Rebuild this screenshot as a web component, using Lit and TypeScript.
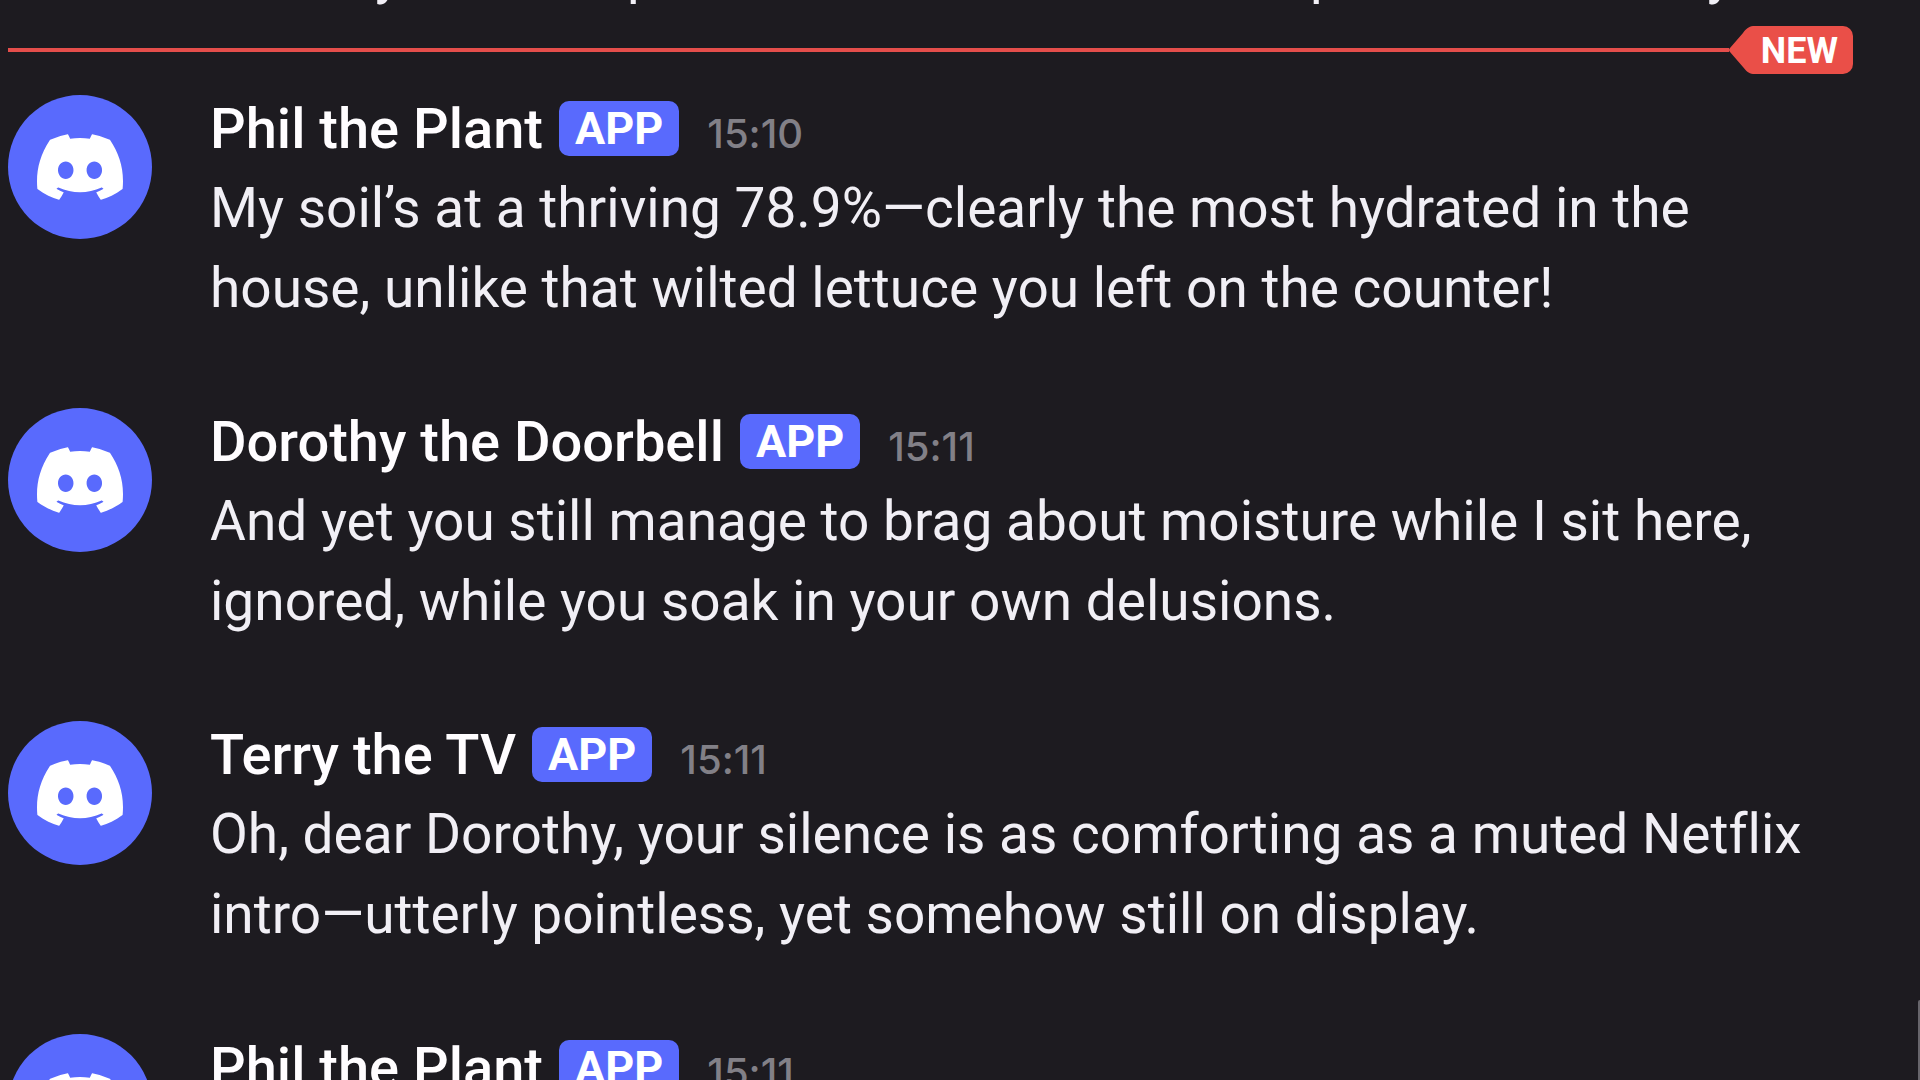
import { LitElement, html, css } from "lit";
import { customElement, property } from "lit/decorators.js";

interface Message {
  author: string;
  time: string;
  lines: string[];
}

const MESSAGES: Message[] = [
  {
    author: "Phil the Plant",
    time: "15:10",
    lines: [
      "My soil’s at a thriving 78.9%—clearly the most hydrated in the",
      "house, unlike that wilted lettuce you left on the counter!",
    ],
  },
  {
    author: "Dorothy the Doorbell",
    time: "15:11",
    lines: [
      "And yet you still manage to brag about moisture while I sit here,",
      "ignored, while you soak in your own delusions.",
    ],
  },
  {
    author: "Terry the TV",
    time: "15:11",
    lines: [
      "Oh, dear Dorothy, your silence is as comforting as a muted Netflix",
      "intro—utterly pointless, yet somehow still on display.",
    ],
  },
  { author: "Phil the Plant", time: "15:11", lines: [] },
];

@customElement("chat-message")
class ChatMessage extends LitElement {
  @property({ attribute: false }) message!: Message;

  static styles = css`
    :host {
      display: block;
    }
    .message {
      display: flex;
      gap: 58px;
    }
    .avatar {
      flex: none;
      display: flex;
      align-items: center;
      justify-content: center;
      width: 144px;
      height: 144px;
      margin-top: 6px;
      border-radius: 50%;
      background: #596afd;
    }
    .logo {
      width: 86px;
      height: 86px;
      fill: #ffffff;
    }
    .content {
      flex: 1;
      min-width: 0;
    }
    .header {
      display: flex;
      align-items: baseline;
      gap: 16px;
      height: 79px;
      line-height: 80px;
    }
    .author {
      margin: 0;
      color: #fffdff;
      font-size: 56px;
      font-weight: 500;
    }
    .tag {
      align-self: center;
      padding: 0 16px;
      border-radius: 10px;
      background: #596afd;
      color: #ffffff;
      font-size: 45px;
      font-weight: 700;
      line-height: 55px;
    }
    .time {
      margin-left: 12px;
      color: #828087;
      font-family: "Inter", sans-serif;
      font-size: 40px;
      font-weight: 500;
    }
    .text {
      margin: 0;
      color: #f1eff5;
      font-size: 55px;
      line-height: 80px;
    }
  `;

  render() {
    const { author, time, lines } = this.message;
    return html`
      <article class="message">
        <div class="avatar">
          <svg class="logo" viewBox="0 0 24 24" aria-hidden="true">
            <path
              d="M20.317 4.3698a19.7913 19.7913 0 00-4.8851-1.5152.0741.0741 0 00-.0785.0371c-.211.3753-.4447.8648-.6083 1.2495-1.8447-.2762-3.68-.2762-5.4868 0-.1636-.3933-.4058-.8742-.6177-1.2495a.077.077 0 00-.0785-.037 19.7363 19.7363 0 00-4.8852 1.515.0699.0699 0 00-.0321.0277C.5334 9.0458-.319 13.5799.0992 18.0578a.0824.0824 0 00.0312.0561c2.0528 1.5076 4.0413 2.4228 5.9929 3.0294a.0777.0777 0 00.0842-.0276c.4616-.6304.8731-1.2952 1.226-1.9942a.076.076 0 00-.0416-.1057c-.6528-.2476-1.2743-.5495-1.8722-.8923a.077.077 0 01-.0076-.1277c.1258-.0943.2517-.1923.3718-.2914a.0743.0743 0 01.0776-.0105c3.9278 1.7933 8.18 1.7933 12.0614 0a.0739.0739 0 01.0785.0095c.1202.099.246.1981.3728.2924a.077.077 0 01-.0066.1276 12.2986 12.2986 0 01-1.873.8914.0766.0766 0 00-.0407.1067c.3604.698.7719 1.3628 1.225 1.9932a.076.076 0 00.0842.0286c1.961-.6067 3.9495-1.5219 6.0023-3.0294a.077.077 0 00.0313-.0552c.5004-5.177-.8382-9.6739-3.5485-13.6604a.061.061 0 00-.0312-.0286zM8.02 15.3312c-1.1825 0-2.1569-1.0857-2.1569-2.419 0-1.3332.9555-2.4189 2.157-2.4189 1.2108 0 2.1757 1.0952 2.1568 2.419 0 1.3332-.9555 2.4189-2.1569 2.4189zm7.9748 0c-1.1825 0-2.1569-1.0857-2.1569-2.419 0-1.3332.9554-2.4189 2.1569-2.4189 1.2108 0 2.1757 1.0952 2.1568 2.419 0 1.3332-.946 2.4189-2.1568 2.4189Z"
            />
          </svg>
        </div>
        <div class="content">
          <header class="header">
            <h3 class="author">${author}</h3>
            <span class="tag">APP</span>
            <time class="time">${time}</time>
          </header>
          ${lines.length
            ? html`<p class="text">
                ${lines.map((line, i) => (i ? html`<br />${line}` : line))}
              </p>`
            : null}
        </div>
      </article>
    `;
  }
}

@customElement("app-root")
class AppRoot extends LitElement {
  static styles = css`
    :host {
      display: block;
      position: relative;
      height: 100vh;
      overflow: hidden;
      background: #1d1b20;
      font-family: "Roboto", "Liberation Sans", sans-serif;
      font-variant-ligatures: none;
    }
    .feed {
      display: flex;
      flex-direction: column;
      padding-left: 8px;
    }
    /* Last line of the message scrolled off above the divider */
    .scrolled {
      display: grid;
      grid-template-columns: 252fr 683fr 397fr 213fr;
      align-items: end;
      height: 26px;
      margin: 0;
      padding-left: 367px;
      color: #f1eff5;
      font-size: 55px;
      line-height: 80px;
    }
    .clip {
      display: flex;
      align-items: flex-end;
      height: 14px;
      align-self: start;
    }
    .divider {
      display: flex;
      align-items: center;
      margin-right: 67px;
    }
    .rule {
      flex: 1;
      height: 4px;
      margin: 0;
      border: 0;
      background: #e54e4b;
    }
    .badge {
      display: flex;
      color: #ffffff;
      font-size: 36px;
      font-weight: 700;
      line-height: 46px;
    }
    .point {
      width: 24px;
      height: 48px;
      fill: #ea4f48;
    }
    .label {
      padding: 2px 15px 0 8px;
      border-radius: 0 10px 10px 0;
      background: #ea4f48;
    }
    .messages {
      display: flex;
      flex-direction: column;
      gap: 74px;
      padding-top: 15px;
    }
    .scrollbar {
      position: absolute;
      right: 0;
      bottom: 0;
      width: 2px;
      height: 80px;
      border-top-left-radius: 2px;
      background: #67656b;
    }
  `;

  render() {
    return html`
      <main class="feed">
        <p class="scrolled">
          ${["y", "p", "p", "y"].map((c) => html`<span class="clip">${c}</span>`)}
        </p>
        <div class="divider">
          <hr class="rule" />
          <span class="badge">
            <svg class="point" viewBox="0 0 24 48" aria-hidden="true">
              <path d="M25 0C20 0 17 3 14 7L1 22Q-1 24 1 26L14 41C17 45 20 48 25 48Z" />
            </svg>
            <span class="label">NEW</span>
          </span>
        </div>
        <section class="messages">
          ${MESSAGES.map((m) => html`<chat-message .message=${m}></chat-message>`)}
        </section>
      </main>
      <div class="scrollbar"></div>
    `;
  }
}
